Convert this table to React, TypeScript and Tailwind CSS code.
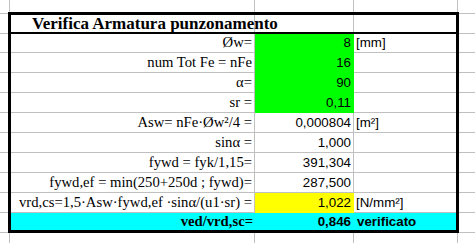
import React from 'react'

type Row = {
  label: string
  value: string
  unit?: string
  fill?: 'green' | 'yellow'
  first?: boolean
}

const rows: Row[] = [
  { label: 'Øw=', value: '8', unit: '[mm]', fill: 'green', first: true },
  { label: 'num Tot Fe = nFe', value: '16', fill: 'green' },
  { label: 'α=', value: '90', fill: 'green' },
  { label: 'sr =', value: '0,11', fill: 'green' },
  { label: 'Asw= nFe·Øw²/4  =', value: '0,000804', unit: '[m²]' },
  { label: 'sinα =', value: '1,000' },
  { label: 'fywd = fyk/1,15=', value: '391,304' },
  { label: 'fywd,ef = min(250+250d ; fywd)=', value: '287,500' },
  { label: 'vrd,cs=1,5·Asw·fywd,ef ·sinα/(u1·sr) =', value: '1,022', unit: '[N/mm²]', fill: 'yellow' },
]

// gridline rows for the margins left and right of the table
const MarginLines = ({ width }: { width: string }) => (
  <div className={`flex flex-col ${width}`}>
    <div className="h-[2px] border-b border-[#c0c0c0]" />
    <div className="h-[20px] border-b border-[#c0c0c0]" />
    <div className="h-[19px] border-b border-[#c0c0c0]" />
    {Array.from({ length: 9 }).map((_, i) => (
      <div key={i} className="h-[20px] border-b border-[#c0c0c0]" />
    ))}
  </div>
)

const ColumnStrip = ({ height }: { height: string }) => (
  <div className={`flex ${height}`}>
    <div className="w-[10px] border-r border-[#c0c0c0]" />
    <div className="w-[245px] border-r border-[#c0c0c0]" />
    <div className="w-[99px] border-r border-[#c0c0c0]" />
    <div className="w-[104px] border-r border-[#c0c0c0]" />
    <div className="flex-1" />
  </div>
)

export default function App() {
  return (
    <div className="w-[475px] h-[243px] bg-white overflow-hidden text-black">
      <ColumnStrip height="h-[12px]" />
      <div className="flex h-[221px]">
        <MarginLines width="w-[8px]" />
        <div className="w-[451px] h-[221px] border-[3px] border-black flex flex-col">
          {/* header */}
          <div className="flex h-[19px] border-b-2 border-black">
            <div className="w-[244px] border-r border-[#c0c0c0] flex items-end pl-[21px] whitespace-nowrap [font-family:'Liberation_Serif',serif] font-bold text-[17px] leading-[17px]">
              Verifica Armatura punzonamento
            </div>
            <div className="w-[99px] border-r border-[#c0c0c0]" />
            <div className="flex-1" />
          </div>
          {rows.map((r) => {
            const h = r.first ? 'h-[19px]' : 'h-[20px]'
            const fill =
              r.fill === 'green'
                ? 'bg-[#00ff00] border-[#00ff00]'
                : r.fill === 'yellow'
                  ? 'bg-[#ffff00] border-[#ffff00]'
                  : 'border-[#c0c0c0]'
            return (
              <div key={r.label} className={`flex ${h}`}>
                <div className="w-[244px] border-r border-b border-[#c0c0c0] flex items-end justify-end pr-[2px] pb-[1px] whitespace-nowrap [font-family:'Liberation_Serif',serif] text-[14.67px] leading-[17px]">
                  {r.label}
                </div>
                <div className={`w-[99px] border-r border-b ${fill} flex items-end justify-end pr-[2px] pb-[2px] [font-family:'Liberation_Sans',sans-serif] text-[13.33px] leading-[15px]`}>
                  {r.value}
                </div>
                <div className="flex-1 border-b border-[#c0c0c0] flex items-end pl-[2px] pb-[2px] whitespace-nowrap [font-family:'Liberation_Sans',sans-serif] text-[13.33px] leading-[15px]">
                  {r.unit}
                </div>
              </div>
            )
          })}
          {/* result row */}
          <div className="flex h-[17px] bg-[#00ffff]">
            <div className="w-[244px] flex items-end justify-end pr-[2px] whitespace-nowrap [font-family:'Liberation_Serif',serif] font-bold text-[14.67px] leading-[17px]">
              ved/vrd,sc=
            </div>
            <div className="w-[99px] flex items-end justify-end pr-[3px] pb-[1px] [font-family:'Liberation_Sans',sans-serif] font-bold text-[13.33px] leading-[15px]">
              0,846
            </div>
            <div className="flex-1 flex items-end pl-[3px] pb-[1px] whitespace-nowrap [font-family:'Liberation_Sans',sans-serif] font-bold text-[13.33px] leading-[15px]">
              verificato
            </div>
          </div>
        </div>
        <MarginLines width="w-[16px]" />
      </div>
      <ColumnStrip height="h-[10px]" />
    </div>
  )
}
